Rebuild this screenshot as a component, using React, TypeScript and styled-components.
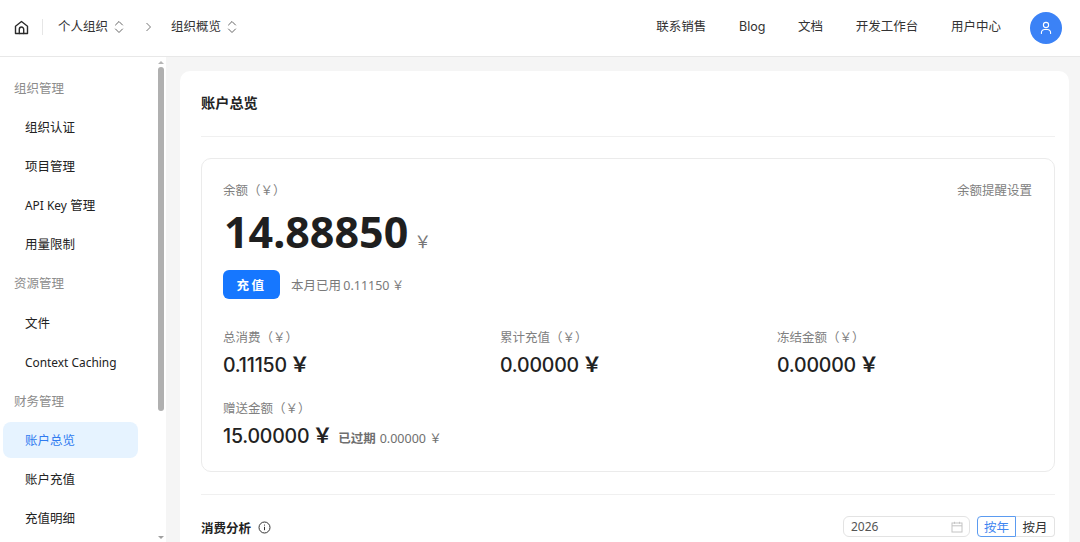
import React from "react";
import styled, { createGlobalStyle } from "styled-components";

const Global = createGlobalStyle`
  html, body { margin: 0; padding: 0; height: 100%; overflow: hidden; background: #fff; }
  body { font-family: Inter, "Noto Sans CJK SC", sans-serif; color: #1f1f1f; }
  #root { height: 542px; }
  * { box-sizing: border-box; }
`;

const Page = styled.div`
  width: 1080px; height: 542px; display: flex; flex-direction: column; overflow: hidden;
`;
const Header = styled.header`
  height: 57px; flex: none; display: flex; align-items: center; justify-content: space-between;
  padding: 0 18px 2px 14px; border-bottom: 1px solid #e8e8e8; background: #fff;
`;
const HeaderLeft = styled.div`display: flex; align-items: center; font-size: 12.5px; color: #333;`;
const VDivider = styled.span`width: 1px; height: 16px; background: #e6e6e6; margin: 0 15px 0 13px;`;
const Crumb = styled.span`display: inline-flex; align-items: center; gap: 6px; line-height: 20px;`;
const Chevron = styled.span`display: inline-flex; margin: 0 19.5px 0 20.5px; color: #777;`;
const HeaderRight = styled.nav`display: flex; align-items: center; font-size: 12.5px; color: #333;`;
const NavLink = styled.a`margin-right: 32.7px; line-height: 20px;`;
const Avatar = styled.span`
  width: 32px; height: 32px; border-radius: 50%; background: #3b82f6; display: inline-flex;
  align-items: center; justify-content: center; margin: 2px 0 0 -3.7px;
`;
const Body = styled.div`flex: 1; display: flex; min-height: 0; background: #f5f5f5;`;
const Sidebar = styled.aside`
  width: 166px; flex: none; background: #fff; display: flex; position: relative; overflow: hidden;
`;
const Menu = styled.div`width: 156px; padding: 13px 0 0 3px; flex: none;`;
const GroupLabel = styled.div`
  font-size: 12.5px; color: #8c8c8c; height: 36px; line-height: 38px; padding-left: 11px; margin-bottom: 3.1px;
`;
const MenuItem = styled.div<{ $active?: boolean }>`
  width: 135px; height: 36px; line-height: 38px; border-radius: 8px; padding-left: 22px; margin-bottom: 3.1px;
  font-size: 12.5px; color: ${(p) => (p.$active ? "#2f7bf0" : "#222")};
  background: ${(p) => (p.$active ? "#e6f3ff" : "transparent")};
`;
const LatinText = styled.span`font-family: "Noto Sans", sans-serif; font-size: 11.9px; line-height: 1;`;
const ScrollTrack = styled.div`
  position: absolute; left: 158px; top: 0; bottom: 0; width: 6px;
`;
const ScrollThumb = styled.div`
  position: absolute; top: 10px; left: 0; width: 6px; height: 344px; background: #b0b0b0; border-radius: 3px;
`;
const ArrowUp = styled.div`
  position: absolute; top: 4px; left: 0; border: 3px solid transparent; border-bottom: 3px solid #b5b5b5; border-top: 0;
`;
const ArrowDown = styled.div`
  position: absolute; bottom: 3px; left: 0; border: 3px solid transparent; border-top: 3px solid #a0a0a0; border-bottom: 0;
`;
const Main = styled.main`flex: 1; padding: 14px 11px 0 14px; min-width: 0; overflow: hidden;`;
const Panel = styled.section`
  background: #fff; border-radius: 10px 10px 0 0; height: 520px; padding: 0 14px 0 21px;
`;
const PanelTitle = styled.h1`
  margin: 0; height: 66px; line-height: 64px; font-size: 14.2px; font-weight: 700; color: #222;
  border-bottom: 1px solid #f0f0f0;
`;
const Card = styled.div`
  margin-top: 21px; height: 314px; border: 1px solid #ebebeb; border-radius: 10px; padding: 23px 22px 0 21px;
`;
const BalanceTop = styled.div`display: flex; justify-content: space-between; font-size: 12.5px; color: #808080; line-height: 18px;`;
const BalanceLink = styled.span`color: #808080;`;
const BalanceRow = styled.div`display: flex; align-items: baseline; margin-top: 7px; height: 50px;`;
const BalanceValue = styled.span`
  font-family: "Noto Sans", sans-serif; font-size: 43px; line-height: 50px; font-weight: 700; color: #1f1f1f; margin-left: 1px;
`;
const BalanceUnit = styled.span`font-size: 17px; color: #777; margin-left: 6px;`;
const ActionRow = styled.div`display: flex; align-items: center; margin-top: 13px; height: 29px;`;
const Recharge = styled.button`
  width: 57px; height: 29px; border: 0; border-radius: 6px; background: #1677ff; color: #fff; font: inherit;
  font-size: 12.5px; font-weight: 700; letter-spacing: 2.5px; padding: 0; margin-right: 11px;
`;
const UsedText = styled.span`font-family: "Noto Sans", "Noto Sans CJK SC", sans-serif; font-size: 12.5px; color: #7a7a7a; word-spacing: -1px;`;
const Stats = styled.div`
  display: grid; grid-template-columns: 277px 277px 277px; row-gap: 22px; margin-top: 30px;
`;
const Stat = styled.div`display: flex; flex-direction: column;`;
const StatLabel = styled.div`font-size: 12.5px; line-height: 18px; color: #808080;`;
const StatValue = styled.div`
  margin-top: 5px; display: flex; align-items: baseline; font-size: 19.5px; line-height: 26px; font-weight: 500; color: #222;
  letter-spacing: -0.2px;
`;
const StatYen = styled.span`margin-left: 3px; font-size: 20px; line-height: 26px; font-weight: 700;`;
const Expired = styled.span`
  font-family: "Noto Sans", "Noto Sans CJK SC", sans-serif; font-size: 12.5px; font-weight: 400; color: #6f6f6f;
  margin-left: 6px; white-space: nowrap; letter-spacing: 0;
`;
const ExpiredLabel = styled.span`font-weight: 700; margin-right: 4px;`;
const Divider = styled.div`height: 1px; background: #f0f0f0; margin-top: 22px;`;
const AnalysisRow = styled.div`
  margin-top: 20px; height: 24px; display: flex; align-items: center; justify-content: space-between;
`;
const AnalysisTitle = styled.div`display: flex; align-items: center; gap: 7px; font-size: 12.5px; font-weight: 700; color: #222;`;
const Controls = styled.div`display: flex; align-items: center; margin-top: -1px;`;
const YearInput = styled.div`
  width: 127px; height: 21px; border: 1px solid #e3e3e3; border-radius: 6px; display: flex; align-items: center;
  justify-content: space-between; padding: 0 6px 0 7px; font-family: "Noto Sans", sans-serif; font-size: 12px; color: #555; margin-right: 7px;
`;
const Segment = styled.span<{ $active?: boolean }>`
  width: 39px; height: 21px; display: inline-flex; align-items: center; justify-content: center;
  font-size: 12.5px; color: ${(p) => (p.$active ? "#3f86f0" : "#333")};
  border: 1px solid ${(p) => (p.$active ? "#5b9bf0" : "#e3e3e3")};
  border-radius: ${(p) => (p.$active ? "4px 0 0 4px" : "0 4px 4px 0")};
  ${(p) => (p.$active ? "" : "border-left: 0;")}
`;

const groups: { label: string; items: React.ReactNode[] }[] = [
  { label: "组织管理", items: ["组织认证", "项目管理", <><LatinText>API Key</LatinText> 管理</>, "用量限制"] },
  { label: "资源管理", items: ["文件", <LatinText>Context Caching</LatinText>] },
  { label: "财务管理", items: ["账户总览", "账户充值", "充值明细"] },
];

const Updown = () => (
  <svg width="10" height="14" viewBox="0 0 10 14" fill="none" stroke="#666" strokeWidth="1" strokeLinecap="round" strokeLinejoin="round">
    <path d="M1.5 5 5 1.5 8.5 5M1.5 9 5 12.5 8.5 9" />
  </svg>
);

export default function App() {
  return (
    <Page>
      <Global />
      <Header>
        <HeaderLeft>
          <svg width="15" height="15" viewBox="0 0 15 15" fill="none" stroke="#2b2b2b" strokeWidth="1.4" strokeLinejoin="round" strokeLinecap="round">
            <path d="M1.5 6.2 7.5 1.5l6 4.7v7.3h-12z" />
            <path d="M5.3 13.5V9.2a2.2 2.2 0 0 1 4.4 0v4.3" />
          </svg>
          <VDivider />
          <Crumb>个人组织 <Updown /></Crumb>
          <Chevron>
            <svg width="7" height="10" viewBox="0 0 7 10" fill="none" stroke="#777" strokeWidth="1"><path d="M1.5 1 5.5 5l-4 4" /></svg>
          </Chevron>
          <Crumb>组织概览 <Updown /></Crumb>
        </HeaderLeft>
        <HeaderRight>
          <NavLink>联系销售</NavLink>
          <NavLink>Blog</NavLink>
          <NavLink>文档</NavLink>
          <NavLink>开发工作台</NavLink>
          <NavLink>用户中心</NavLink>
          <Avatar>
            <svg width="14" height="14" viewBox="0 0 14 14" fill="none" stroke="#fff" strokeWidth="1.1" strokeLinecap="round">
              <circle cx="7" cy="4" r="2.6" />
              <path d="M2.4 12.5v-.8A3.2 3.2 0 0 1 5.6 8.5h2.8a3.2 3.2 0 0 1 3.2 3.2v.8" />
            </svg>
          </Avatar>
        </HeaderRight>
      </Header>
      <Body>
        <Sidebar>
          <Menu>
            {groups.map((g) => (
              <React.Fragment key={g.label}>
                <GroupLabel>{g.label}</GroupLabel>
                {g.items.map((item, idx) => (
                  <MenuItem key={idx} $active={item === "账户总览"}>{item}</MenuItem>
                ))}
              </React.Fragment>
            ))}
          </Menu>
          <ScrollTrack>
            <ArrowUp />
            <ScrollThumb />
            <ArrowDown />
          </ScrollTrack>
        </Sidebar>
        <Main>
          <Panel>
            <PanelTitle>账户总览</PanelTitle>
            <Card>
              <BalanceTop>
                <span>余额（￥）</span>
                <BalanceLink>余额提醒设置</BalanceLink>
              </BalanceTop>
              <BalanceRow>
                <BalanceValue>14.88850</BalanceValue>
                <BalanceUnit>￥</BalanceUnit>
              </BalanceRow>
              <ActionRow>
                <Recharge>充值</Recharge>
                <UsedText>本月已用 0.11150 ￥</UsedText>
              </ActionRow>
              <Stats>
                <Stat>
                  <StatLabel>总消费（￥）</StatLabel>
                  <StatValue>0.11150<StatYen>￥</StatYen></StatValue>
                </Stat>
                <Stat>
                  <StatLabel>累计充值（￥）</StatLabel>
                  <StatValue>0.00000<StatYen>￥</StatYen></StatValue>
                </Stat>
                <Stat>
                  <StatLabel>冻结金额（￥）</StatLabel>
                  <StatValue>0.00000<StatYen>￥</StatYen></StatValue>
                </Stat>
                <Stat>
                  <StatLabel>赠送金额（￥）</StatLabel>
                  <StatValue>
                    15.00000<StatYen>￥</StatYen>
                    <Expired><ExpiredLabel>已过期</ExpiredLabel>0.00000 ￥</Expired>
                  </StatValue>
                </Stat>
              </Stats>
            </Card>
            <Divider />
            <AnalysisRow>
              <AnalysisTitle>
                消费分析
                <svg width="13" height="13" viewBox="0 0 13 13" fill="none" stroke="#333" strokeWidth="1">
                  <circle cx="6.5" cy="6.5" r="5.5" />
                  <path d="M6.5 5.8v3.4M6.5 3.6v1" />
                </svg>
              </AnalysisTitle>
              <Controls>
                <YearInput>
                  2026
                  <svg width="12" height="12" viewBox="0 0 12 12" fill="none" stroke="#c4c4c4" strokeWidth="1">
                    <rect x="1" y="2" width="10" height="9" />
                    <path d="M1 4.8h10M3.5 .8v2M8.5 .8v2" />
                  </svg>
                </YearInput>
                <Segment $active>按年</Segment>
                <Segment>按月</Segment>
              </Controls>
            </AnalysisRow>
          </Panel>
        </Main>
      </Body>
    </Page>
  );
}
